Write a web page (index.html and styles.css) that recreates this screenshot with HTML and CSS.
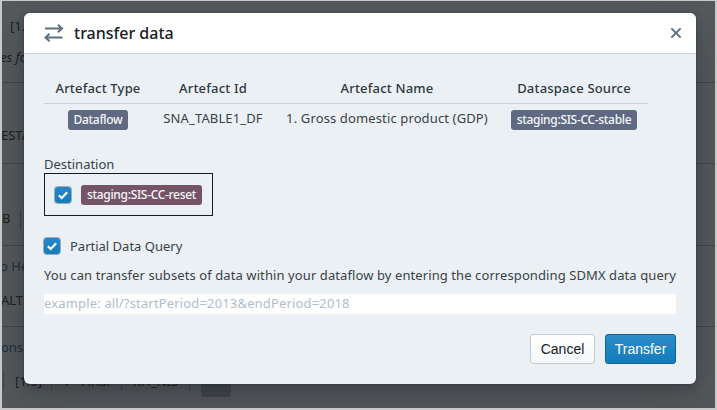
FILE: index.html
```html
<!DOCTYPE html>
<html lang="en">
<head>
<meta charset="utf-8">
<title>transfer data</title>
<link rel="stylesheet" href="styles.css">
</head>
<body>
<main class="page">
  <section class="row row-first"><p class="meta version">[1.0]</p><p class="note">es for</p></section>
  <section class="row row-id"><p class="meta">ESTAT</p></section>
  <section class="row row-short"><p class="meta">B<i class="sep"></i></p></section>
  <section class="row row-titled"><p class="name">o He</p><p class="meta">ALTH</p></section>
  <section class="row row-last"><p class="name">ons</p>
    <div class="details"><span class="cell c1">[1.0]</span><span class="cell c2">♥</span><span class="final">Final</span><span class="cell c3">KH_NIS</span><span class="cell c4"></span><span class="chip"></span></div>
  </section>
</main>
<div class="overlay">
  <div class="dialog" role="dialog">
    <header class="dialog-header">
      <svg class="swap" viewBox="0 0 20 20" width="20" height="20"><path d="M1 5.5H17.5M14 1.7L18 5.5L14 9.3M18.5 14.5H2M5.5 10.7L1.5 14.5L5.5 18.3"/></svg>
      <h1 class="title">transfer data</h1>
      <svg class="close" viewBox="0 0 12 12" width="12" height="12"><path d="M1.4 1.4L10.6 10.6M10.6 1.4L1.4 10.6"/></svg>
    </header>
    <div class="body">
      <table class="artefacts">
        <thead><tr><th class="col-type">Artefact Type</th><th class="col-id">Artefact Id</th><th class="col-name">Artefact Name</th><th class="col-space">Dataspace Source</th></tr></thead>
        <tbody><tr><td><span class="tag">Dataflow</span></td><td><span class="id">SNA_TABLE1_DF</span></td><td><span class="gdp">1. Gross domestic product (GDP)</span></td><td><span class="tag">staging:SIS-CC-stable</span></td></tr></tbody>
      </table>
      <div class="label">Destination</div>
      <div class="destination">
        <span class="check"><svg viewBox="0 0 16 16"><path d="M3.8 8.3L6.7 11L12.2 5.2"/></svg></span>
        <span class="tag tag-plum">staging:SIS-CC-reset</span>
      </div>
      <div class="partial"><span class="check"><svg viewBox="0 0 16 16"><path d="M3.8 8.3L6.7 11L12.2 5.2"/></svg></span><span>Partial Data Query</span></div>
      <p class="help">You can transfer subsets of data within your dataflow by entering the corresponding SDMX data query</p>
      <input class="query" type="text" placeholder="example: all/?startPeriod=2013&amp;endPeriod=2018">
      <footer class="actions"><button class="btn">Cancel</button><button class="btn primary">Transfer</button></footer>
    </div>
  </div>
</div>
</body>
</html>
```
FILE: styles.css
```css
* { box-sizing: border-box; }
body { margin: 0; width: 717px; height: 410px; overflow: hidden; background: #c8c8c8; font-family: "Noto Sans", "Open Sans", sans-serif; font-size: 13px; line-height: 18px; color: #394247; }
p, h1 { margin: 0; }
.page { margin: 1px 2px 2px; height: 407px; overflow: hidden; background: #565a5d; color: #1b2023; }
.row { height: 81.5px; border-bottom: 1px solid #414548; white-space: nowrap; }
.row-first { padding-top: 16px; }
.version { padding-left: 8px; }
.note { font-style: italic; margin: 13px 0 0 -2px; }
.row-id { padding-top: 43px; }
.row-id .meta { margin-left: -1px; }
.row-short { padding-top: 45px; }
.sep { display: inline-block; width: 1px; height: 18px; margin-left: 10px; background: #414548; vertical-align: middle; }
.row-titled { padding-top: 11px; }
.row-titled .name { margin-left: -2px; }
.row-titled .meta { margin: 16px 0 0 -1px; }
.row-last { padding-top: 11px; }
.name { color: #1b303d; margin-left: -1px; }
.details { display: flex; align-items: center; height: 30px; margin-top: 11px; padding-left: 1px; }
.cell { height: 18px; border-left: 1px solid #414548; padding-left: 11px; }
.c1 { width: 48px; }
.c2 { width: 30px; }
.final { width: 40px; }
.c3 { width: 68px; }
.c4 { width: 10px; }
.details > span:not(.chip) { position: relative; top: -1px; }
.chip { width: 30px; height: 30px; border-radius: 3px; background: #44494e; }
.overlay { position: absolute; inset: 1px 2px 2px; overflow: hidden; display: flex; align-items: flex-start; padding: 12px 0 0 22px; }
.dialog { width: 672px; height: 371px; border-radius: 6px; background: #ebf0f4; box-shadow: 0 0 0 1px rgba(16,22,26,.1), 0 4px 8px rgba(16,22,26,.2), 0 18px 46px 6px rgba(16,22,26,.2); }
.dialog-header { display: flex; align-items: center; height: 41px; padding: 0 14px 0 20px; background: #fff; border-bottom: 1px solid #cbd2d7; border-radius: 6px 6px 0 0; }
.swap, .close { fill: none; stroke: #5c7080; stroke-width: 2; }
.title { flex: 1; margin-left: 10px; font-size: 16px; font-weight: 500; line-height: 22px; color: #182026; }
.body { padding: 21px 20px 0; }
.artefacts { width: 604px; border-collapse: collapse; table-layout: fixed; text-align: center; white-space: nowrap; }
th { height: 28px; padding: 0 0 1px; font-weight: 500; letter-spacing: .18px; color: #30383d; }
td { height: 32px; padding: 0; border-top: 1px solid #cbd2d7; }
.id, .gdp { position: relative; top: -1px; letter-spacing: .13px; }
.col-type { width: 108px; }
.col-id { width: 122px; }
.col-name { width: 226px; }
.tag { display: inline-block; height: 20px; padding: 0 6px; border-radius: 3px; background: #5f6982; color: #f5f8fa; font-size: 12px; font-weight: 500; letter-spacing: -.32px; line-height: 20px; vertical-align: middle; }
.tag-plum { background: #755466; }
.label { height: 18px; margin-top: 20px; }
.destination { display: flex; align-items: center; gap: 10px; width: 169px; height: 43px; padding-left: 10px; border: 1px solid #161b1e; }
.check { display: inline-flex; width: 16px; height: 16px; flex: none; border-radius: 3px; background: linear-gradient(#2486c6, #137cbd); box-shadow: 0 0 0 1px rgba(16,45,65,.35); }
.check svg { fill: none; stroke: #fff; stroke-width: 2.2; }
.partial { display: flex; align-items: center; gap: 10px; height: 20px; margin-top: 20px; }
.help { margin-top: 10px; letter-spacing: .092px; white-space: nowrap; }
.query { display: block; width: 632px; height: 20px; margin-top: 10px; padding: 0 0 2px; border: 0; background: #fff; font: inherit; letter-spacing: .16px; }
.query::placeholder { color: #b1bdc7; }
.actions { display: flex; justify-content: flex-end; gap: 10px; margin-top: 20px; }
.btn { width: 65px; height: 30px; padding: 0; border: 1px solid #c4cacf; border-radius: 3px; background: linear-gradient(#fff, #f5f7f9); font: 14px "Liberation Sans", sans-serif; color: #182026; }
.primary { width: 71px; background: linear-gradient(#2c8bc9, #137cbd); border-color: #106194; color: #fff; }
```
